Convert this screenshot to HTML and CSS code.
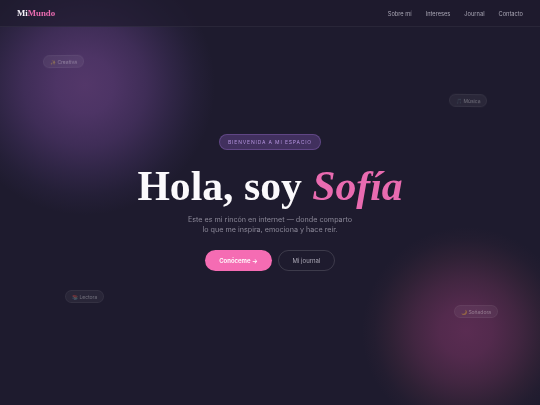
FILE: index.html
```html
<!DOCTYPE html>
<html lang="es">
<head>
<meta charset="utf-8">
<title>MiMundo</title>
<link rel="stylesheet" href="styles.css">
</head>
<body>
<div class="page">
  <div class="glow glow-purple"></div>
  <div class="glow glow-pink"></div>
  <nav class="nav">
    <div class="logo">Mi<span>Mundo</span></div>
    <ul class="links">
      <li>Sobre mí</li>
      <li>Intereses</li>
      <li>Journal</li>
      <li>Contacto</li>
    </ul>
  </nav>
  <span class="chip chip-a">✨ Creativa</span>
  <span class="chip chip-b">🎵 Música</span>
  <span class="chip chip-c">📚 Lectora</span>
  <span class="chip chip-d">🌙 Soñadora</span>
  <main class="hero">
    <div class="badge">BIENVENIDA A MI ESPACIO</div>
    <h1 class="title">Hola, soy <em>Sofía</em></h1>
    <p class="sub">Este es mi rincón en internet — donde comparto<br>lo que me inspira, emociona y hace reír.</p>
    <div class="actions">
      <a class="btn btn-main">Conóceme →</a>
      <a class="btn btn-ghost">Mi journal</a>
    </div>
  </main>
</div>
</body>
</html>
```
FILE: styles.css
```css
* { box-sizing: border-box; margin: 0; padding: 0; }
html, body { width: 540px; height: 405px; overflow: hidden; }
body { background: #1e1b2e; font-family: "Inter", "Liberation Sans", sans-serif; }
.page { position: relative; width: 540px; height: 405px; overflow: hidden; display: flex; flex-direction: column; background: #1e1b2e; }
.glow { position: absolute; border-radius: 50%; }
.glow-purple { left: -45px; top: -45px; width: 260px; height: 260px; background: radial-gradient(circle closest-side, #533769 0%, #4d3465 22%, #3f2d57 47%, #2f2545 68%, #241f37 85%, #1e1b2e 100%); }
.glow-pink { left: 362px; top: 227px; width: 208px; height: 208px; background: radial-gradient(circle closest-side, #5a2c52 0%, #532a4d 25%, #422641 50%, #2f2135 72%, #231d30 88%, #1e1b2e 100%); }
.nav { position: relative; height: 27px; flex: none; display: flex; align-items: center; justify-content: space-between; padding: 0 17px; background: rgba(30, 27, 46, 0.72); border-bottom: 1px solid rgba(255, 255, 255, 0.05); will-change: transform; }
.logo { font-family: "Liberation Serif", serif; font-weight: 700; font-size: 8.8px; color: #f4f0f8; }
.logo span { color: #e96bb0; }
.links { list-style: none; display: flex; gap: 14px; font-size: 5.7px; color: #a9a6b4; }
.chip { position: absolute; display: flex; align-items: center; height: 13px; padding: 0 6px; border-radius: 7px; background: rgba(255, 255, 255, 0.05); border: 1px solid rgba(255, 255, 255, 0.05); color: rgba(255, 255, 255, 0.32); font-size: 5px; white-space: nowrap; will-change: transform; }
.chip-a { left: 43px; top: 55px; transform: rotate(-1deg); }
.chip-b { left: 449px; top: 94px; transform: rotate(1deg); }
.chip-c { left: 65px; top: 290px; }
.chip-d { left: 454px; top: 305px; }
.hero { position: relative; flex: 1; display: flex; flex-direction: column; align-items: center; padding-top: 107px; will-change: transform; }
.badge { display: flex; align-items: center; height: 16px; padding: 0 8px; border-radius: 8px; background: rgba(139, 92, 196, 0.32); border: 1px solid rgba(170, 125, 225, 0.3); color: #b392de; font-size: 5px; letter-spacing: 0.85px; }
.title { margin-top: 9px; font-family: "Liberation Serif", serif; font-weight: 700; font-size: 41.7px; line-height: 54px; color: #fbf9fc; white-space: nowrap; }
.title em { font-style: italic; font-weight: 700; color: #e96bb0; }
.sub { margin-top: 2px; text-align: center; font-size: 7.2px; line-height: 10px; color: #8a8797; }
.actions { margin-top: 15px; display: flex; gap: 6px; }
.btn { display: flex; align-items: center; justify-content: center; height: 21px; border-radius: 11px; font-size: 6px; }
.btn-main { width: 67px; background: #f56cb3; color: #fff; font-weight: 600; }
.btn-ghost { width: 57px; border: 1px solid rgba(255, 255, 255, 0.14); color: #aaa7b5; }
```
